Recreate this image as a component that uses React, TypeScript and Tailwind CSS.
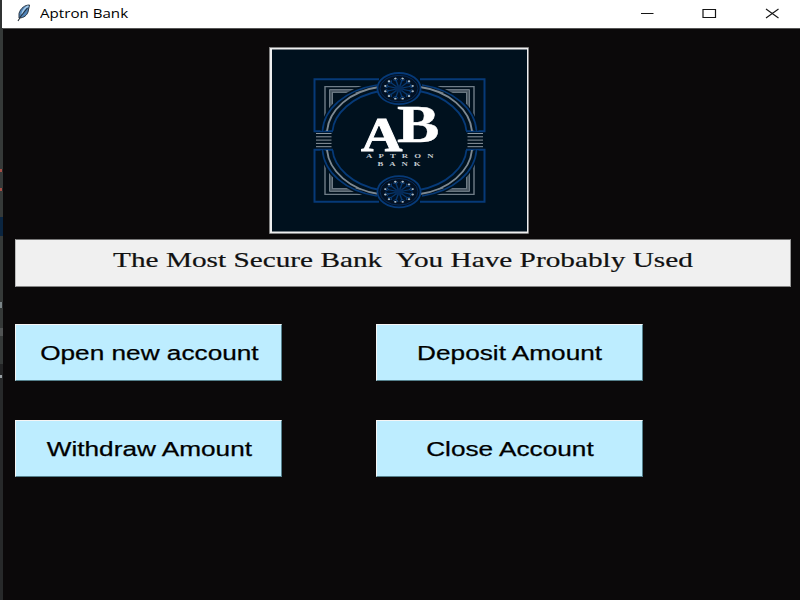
import React from "react";

const SPOKES = [0, 30, 60, 90, 120, 150, 180, 210, 240, 270, 300, 330];

function Rosette({ cy }: { cy: number }) {
  return (
    <g transform={`translate(399 ${cy})`}>
      <ellipse rx="21.6" ry="15.6" fill="#021124" stroke="#063a78" strokeWidth="1.8" />
      <ellipse rx="19" ry="13.3" fill="none" stroke="#052b5c" strokeWidth="0.9" />
      <g transform="scale(1.36 1)">
        {SPOKES.map((a) => (
          <g key={a} transform={`rotate(${a + 15})`}>
            <path d="M0 0V-8" stroke="#06386f" strokeWidth="1.1" />
            <path d="M-1.9 -9.8L0 -8L1.9 -9.8" fill="none" stroke="#0a4486" strokeWidth="0.7" />
            <circle cy="-10.4" r="0.95" fill="#a9bccb" />
          </g>
        ))}
        <circle r="3.4" fill="#052a58" />
      </g>
    </g>
  );
}

function Corner({ transform }: { transform?: string }) {
  return (
    <g transform={transform} fill="none">
      <path d="M379 79.3H314.5V131.3H333" stroke="#063a78" strokeWidth="2" />
      <path d="M325 118V86.6H374" stroke="#6f7d88" strokeWidth="1.4" />
      <path d="M331 109V91H361" stroke="#46545f" strokeWidth="3.6" />
      <path d="M329.6 110V89.7H363M332.4 107V92.3H359" stroke="#7d8993" strokeWidth="0.9" />
      <path d="M322.5 131C324 109 345 89 377 84.5" stroke="#00111e" strokeWidth="4" />
      <path d="M322.5 131C324 109 345 90 377 85" stroke="#063a78" strokeWidth="1.7" />
      <path d="M327 131C329 110 350 91 379 87" stroke="#7d8993" strokeWidth="1.9" />
      <path d="M332.5 131C334 114 352 96 380 91" stroke="#063a78" strokeWidth="1.8" />
    </g>
  );
}

function Pillar({ x }: { x: number }) {
  return (
    <g stroke="#8a959e" strokeWidth="1">
      {[133.5, 136.8, 140.1, 143.4, 146.7].map((y) => (
        <path key={y} d={`M${x} ${y}h15.5`} />
      ))}
    </g>
  );
}

function Logo() {
  return (
    <svg viewBox="269 47 260 187" className="block h-[187px] w-[260px]" role="img" aria-label="Aptron Bank">
      <rect x="269.5" y="47.5" width="259" height="186" fill="#eeeeef" stroke="#8b8b8b" strokeWidth="0.6" />
      <rect x="272" y="49.5" width="255" height="182" fill="#00111e" />
      <Corner />
      <Corner transform="translate(799 0) scale(-1 1)" />
      <Corner transform="translate(0 281) scale(1 -1)" />
      <Corner transform="translate(799 281) scale(-1 -1)" />
      <Pillar x={316} />
      <Pillar x={467.5} />
      <Rosette cy={88.6} />
      <Rosette cy={191.8} />
      <g fill="#fff" fontFamily="Liberation Serif, serif" fontWeight="700">
        <text transform="translate(361 150.6) scale(1.16 1)" fontSize="49.5" stroke="#fff" strokeWidth="0.9">A</text>
        <text transform="translate(397 142) scale(1.22 1)" fontSize="52" stroke="#fff" strokeWidth="0.5">B</text>
        <g fill="#c5cbd0" fontSize="7">
          <text transform="translate(366 158.3) scale(1.25 1)" textLength="54">APTRON</text>
          <text transform="translate(377.5 166) scale(1.25 1)" textLength="34.5">BANK</text>
        </g>
      </g>
    </svg>
  );
}

function Feather() {
  return (
    <svg viewBox="0 0 14 18" className="h-[18px] w-[14px]">
      <path d="M12.5 1C8 1 3.5 4 2 9.5L2 14C7 14 10 11 11 8Z" fill="#4f83b8" stroke="#2a3744" strokeWidth="1" />
      <path d="M11.5 2C9 3 6 6 5 10" fill="none" stroke="#a6cbea" strokeWidth="1.4" />
      <path d="M10.5 4L4 12L1 17" fill="none" stroke="#26313b" strokeWidth="1.1" />
    </svg>
  );
}

function ActionButton({ label, stretch }: { label: string; stretch: string }) {
  return (
    <button className="flex h-[57px] w-[267px] items-center justify-center border border-t-[#f5f5f5] border-l-[#f5f5f5] border-r-[#55808c] border-b-[#55808c] bg-[#bdedff] pl-px pt-px">
      <span className={`whitespace-nowrap text-[20px] leading-6 text-black [-webkit-text-stroke:0.25px_black] ${stretch}`}>{label}</span>
    </button>
  );
}

function EdgeStrip() {
  return (
    <div className="flex w-[3px] flex-col overflow-hidden bg-[#27292a]">
      <div className="h-[141px] bg-[#353938]" />
      <div className="h-[3px] w-[2px] bg-[#a44f46]" />
      <div className="h-[16px] bg-[#353938]" />
      <div className="h-[3px] w-[2px] bg-[#a44f46]" />
      <div className="h-[26px] bg-[#353938]" />
      <div className="h-[19px] bg-[#0b2540]" />
      <div className="h-[66px] bg-[#353938]" />
      <div className="h-[6px] w-[2px] bg-[#7b8588]" />
      <div className="h-[20px] bg-[#353938]" />
      <div className="h-[8px] bg-[#515454]" />
      <div className="h-[28px] bg-[#353938]" />
      <div className="h-[11px] bg-[#222324]" />
      <div className="h-[3px] w-[2px] bg-[#99a0a4]" />
    </div>
  );
}

export default function App() {
  return (
    <div className="flex h-[600px] w-[800px] flex-col overflow-hidden bg-[#0b090a] font-['Liberation_Sans',Arial,sans-serif]">
      <header className="flex h-7 shrink-0 bg-white">
        <div className="w-[2px] bg-[#303333]" />
        <div className="flex flex-1 items-center pb-[2px] pl-[15px]">
          <Feather />
          <span className="ml-[9px] mt-[2px] origin-left scale-x-[1.21] font-['Open_Sans','Noto_Sans',sans-serif] text-[12.5px] leading-5 text-black">
            Aptron Bank
          </span>
        </div>
        <svg viewBox="0 0 180 28" className="h-7 w-[180px]" fill="none" stroke="#151515">
          <path d="M21 13.5H33.5" />
          <path d="M83 9.5H95.5V17.5H83Z" strokeWidth="1.2" />
          <path d="M146 9L158.5 18M158.5 9L146 18" strokeWidth="1.1" />
        </svg>
      </header>
      <div className="flex min-h-0 flex-1">
        <EdgeStrip />
        <main className="flex flex-1 flex-col border-t border-[#555] pl-3 pr-[9px] pt-[18px]">
          <div className="pl-[254px]">
            <Logo />
          </div>
          <div className="mt-[5px] flex h-[48px] w-[776px] items-start justify-center border border-t-[#777] border-l-[#bbb] border-r-[#999] border-b-[#858585] bg-[#f0f0f0] pt-[6px]">
            <h1 className="scale-x-[1.394] whitespace-pre font-['Liberation_Serif','Times_New_Roman',serif] text-[21px] leading-7 text-[#111] [-webkit-text-stroke:0.2px_#111]">
              {"The Most Secure Bank  You Have Probably Used"}
            </h1>
          </div>
          <div className="mt-[37px] grid w-[628px] grid-cols-[267px_267px] gap-x-[94px] gap-y-[39px]">
            <ActionButton label="Open new account" stretch="scale-x-[1.31]" />
            <ActionButton label="Deposit Amount" stretch="scale-x-[1.31]" />
            <ActionButton label="Withdraw Amount" stretch="scale-x-[1.31]" />
            <ActionButton label="Close Account" stretch="scale-x-[1.31]" />
          </div>
        </main>
      </div>
    </div>
  );
}
